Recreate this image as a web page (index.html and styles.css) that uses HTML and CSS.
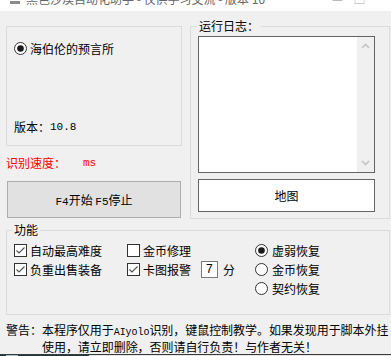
FILE: index.html
```html
<!DOCTYPE html>
<html lang="zh-CN">
<head>
<meta charset="utf-8">
<title>助手</title>
<link rel="stylesheet" href="styles.css">
</head>
<body>
<div class="window">
  <div class="titlebar">
    <span class="tb-icon"></span>
    <span class="tb-text">黑色沙漠自动化助手 - 仅供学习交流 - 版本 10.8 by hailun...</span>
    <span class="tb-btns">—&nbsp;&nbsp;&nbsp;&nbsp;□</span>
  </div>
  <div class="content">
    <div class="top">
      <div class="left">
        <div class="group group-info">
          <div class="radio">
            <svg class="rbox" width="13" height="13" viewBox="0 0 13 13"><circle cx="6.5" cy="6.5" r="6" fill="#fff" stroke="#333"/><circle cx="6.5" cy="6.5" r="3.3" fill="#1a1a1a"/></svg>
            <span>海伯伦的预言所</span>
          </div>
          <div class="version">版本：<span class="lat">10.8</span></div>
        </div>
        <div class="speed">识别速度：<span class="ms">ms</span></div>
        <button class="btn-main"><span class="lat">F4</span>开始 <span class="lat">F5</span>停止</button>
      </div>
      <div class="group group-log">
        <span class="group-label">运行日志：</span>
        <div class="log">
          <div class="log-area"></div>
          <div class="scroll">
            <svg width="9" height="6" viewBox="0 0 9 6"><path d="M1 5 L4.5 1.5 L8 5" stroke="#c4c4c4" stroke-width="1.6" fill="none"/></svg>
            <svg width="9" height="6" viewBox="0 0 9 6"><path d="M1 1 L4.5 4.5 L8 1" stroke="#c4c4c4" stroke-width="1.6" fill="none"/></svg>
          </div>
        </div>
        <button class="btn-map">地图</button>
      </div>
    </div>
    <div class="group group-func">
      <span class="group-label">功能</span>
      <div class="checks">
        <div class="cb">
          <svg width="13" height="13" viewBox="0 0 13 13"><rect x="0.5" y="0.5" width="12" height="12" fill="#fff" stroke="#333"/><path d="M2.5 6.5 L5 9 L10.5 3.5" fill="none" stroke="#555" stroke-width="1.2"/></svg>
          <span>自动最高难度</span>
        </div>
        <div class="cb">
          <svg width="13" height="13" viewBox="0 0 13 13"><rect x="0.5" y="0.5" width="12" height="12" fill="#fff" stroke="#333"/></svg>
          <span>金币修理</span>
        </div>
        <div class="cb">
          <svg width="13" height="13" viewBox="0 0 13 13"><rect x="0.5" y="0.5" width="12" height="12" fill="#fff" stroke="#333"/><path d="M2.5 6.5 L5 9 L10.5 3.5" fill="none" stroke="#555" stroke-width="1.2"/></svg>
          <span>负重出售装备</span>
        </div>
        <div class="cb">
          <svg width="13" height="13" viewBox="0 0 13 13"><rect x="0.5" y="0.5" width="12" height="12" fill="#fff" stroke="#333"/><path d="M2.5 6.5 L5 9 L10.5 3.5" fill="none" stroke="#555" stroke-width="1.2"/></svg>
          <span>卡图报警</span>
          <span class="num">7</span>
          <span class="unit">分</span>
        </div>
      </div>
      <div class="radios">
        <div class="radio-item">
          <svg width="13" height="13" viewBox="0 0 13 13"><circle cx="6.5" cy="6.5" r="6" fill="#fff" stroke="#333"/><circle cx="6.5" cy="6.5" r="3.3" fill="#1a1a1a"/></svg>
          <span>虚弱恢复</span>
        </div>
        <div class="radio-item">
          <svg width="13" height="13" viewBox="0 0 13 13"><circle cx="6.5" cy="6.5" r="6" fill="#fff" stroke="#333"/></svg>
          <span>金币恢复</span>
        </div>
        <div class="radio-item">
          <svg width="13" height="13" viewBox="0 0 13 13"><circle cx="6.5" cy="6.5" r="6" fill="#fff" stroke="#333"/></svg>
          <span>契约恢复</span>
        </div>
      </div>
    </div>
    <div class="warning">
      <span class="warn-label">警告：</span>
      <span class="warn-text">本程序仅用于<span class="lat-sm">AIyolo</span>识别，键鼠控制教学。如果发现用于脚本外挂<br>使用，请立即删除，否则请自行负责！与作者无关！</span>
    </div>
  </div>
  <div class="taskbar"><div class="tb-start"><span class="tb-start-icon"></span></div></div>
</div>
</body>
</html>
```

FILE: styles.css
```css
html, body {
  margin: 0;
  padding: 0;
}
body {
  width: 391px;
  height: 356px;
  overflow: hidden;
  background: #f0f0f0;
  font-family: "Noto Sans CJK SC", sans-serif;
  font-size: 12px;
  color: #000;
}
.window {
  display: flex;
  flex-direction: column;
  height: 356px;
}
.titlebar {
  height: 11px;
  background: #fff;
  overflow: hidden;
  display: flex;
  align-items: flex-start;
  padding-left: 10px;
  gap: 6px;
  flex: none;
}
.tb-icon {
  width: 10px;
  height: 3px;
  background: #8a8a8a;
  margin-top: 1px;
}
.tb-text {
  font-size: 12px;
  line-height: 12px;
  margin-top: -7px;
  color: #666;
  white-space: nowrap;
  width: 240px;
  overflow: hidden;
}
.tb-btns {
  font-size: 12px;
  line-height: 12px;
  margin-top: -7px;
  color: #aaa;
  margin-left: 60px;
}
.content {
  flex: 1;
  padding: 15px 0 0 6px;
  display: flex;
  flex-direction: column;
}
.top {
  display: flex;
  gap: 8px;
  height: 193px;
  flex: none;
}
.left {
  width: 176px;
  display: flex;
  flex-direction: column;
}
.group {
  border: 1px solid #dcdcdc;
  box-sizing: border-box;
  position: relative;
}
.group-label {
  position: absolute;
  top: -8px;
  left: 6px;
  padding: 0 2px;
  background: #f0f0f0;
  line-height: 14px;
  height: 14px;
}
.group-info {
  height: 120px;
  padding: 15px 0 0 7px;
}
.radio {
  display: flex;
  align-items: center;
  gap: 3px;
  height: 13px;
  line-height: 13px;
}
.radio svg, .cb svg, .radio-item svg {
  flex: none;
}
.version {
  margin-top: 65px;
  height: 14px;
  line-height: 14px;
  display: flex;
  align-items: center;
}
.lat {
  font-family: "Liberation Mono", monospace;
  font-size: 11px;
}
.lat-sm {
  font-family: "Liberation Mono", monospace;
  font-size: 10px;
}
.speed {
  margin-top: 10px;
  height: 14px;
  line-height: 14px;
  color: #ff0000;
  display: flex;
  align-items: center;
}
.ms {
  margin-left: 17px;
  font-family: "Liberation Mono", monospace;
  font-size: 11px;
}
.btn-main {
  margin: 11px 0 0 1px;
  width: 174px;
  height: 37px;
  background: #e1e1e1;
  border: 1px solid #adadad;
  font-family: "Noto Sans CJK SC", sans-serif;
  font-size: 12px;
  color: #000;
  padding: 0;
}
.group-log {
  width: 200px;
  height: 193px;
  padding: 9px 0 0 7px;
}
.log {
  width: 177px;
  height: 137px;
  border: 1px solid #646464;
  box-sizing: border-box;
  background: #fff;
  display: flex;
}
.log-area {
  flex: 1;
}
.scroll {
  width: 17px;
  background: #f0f0f0;
  display: flex;
  flex-direction: column;
  justify-content: space-between;
  align-items: center;
  padding: 6px 0;
  box-sizing: border-box;
}
.btn-map {
  display: block;
  margin-top: 6px;
  width: 177px;
  height: 33px;
  background: #fff;
  border: 1px solid #646464;
  font-family: "Noto Sans CJK SC", sans-serif;
  font-size: 12px;
  color: #000;
  padding: 0;
}
.group-func {
  margin-top: 11px;
  width: 384px;
  height: 85px;
  padding: 10px 0 0 7px;
  display: flex;
  flex: none;
}
.group-func .group-label {
  left: 5px;
}
.checks {
  display: grid;
  grid-template-columns: 113px auto;
  grid-auto-rows: 19px;
  width: 241px;
  align-content: start;
}
.cb {
  display: flex;
  align-items: center;
  gap: 3px;
  white-space: nowrap;
}
.num {
  width: 17px;
  height: 17px;
  box-sizing: border-box;
  border: 1px solid #7a7a7a;
  background: #fff;
  margin-left: 7px;
  padding-left: 4px;
  font-family: "Liberation Sans", sans-serif;
  font-size: 12px;
  line-height: 15px;
}
.unit {
  margin-left: 2px;
}
.radios {
  display: flex;
  flex-direction: column;
}
.radio-item {
  height: 19px;
  display: flex;
  align-items: center;
  gap: 4px;
}
.warning {
  margin-top: 8px;
  display: flex;
  line-height: 14px;
  white-space: nowrap;
}
.warn-label {
  width: 36px;
  flex: none;
}
.warn-text {
  letter-spacing: -0.05px;
}
.taskbar {
  height: 4px;
  box-sizing: border-box;
  border-top: 1px solid #3a3a3a;
  background: #e6e6e6;
  display: flex;
  flex: none;
}
.tb-start {
  width: 83px;
  background: #1b3a40;
  display: flex;
  padding-left: 6px;
}
.tb-start-icon {
  width: 12px;
  background: #9fc3d6;
}
```
